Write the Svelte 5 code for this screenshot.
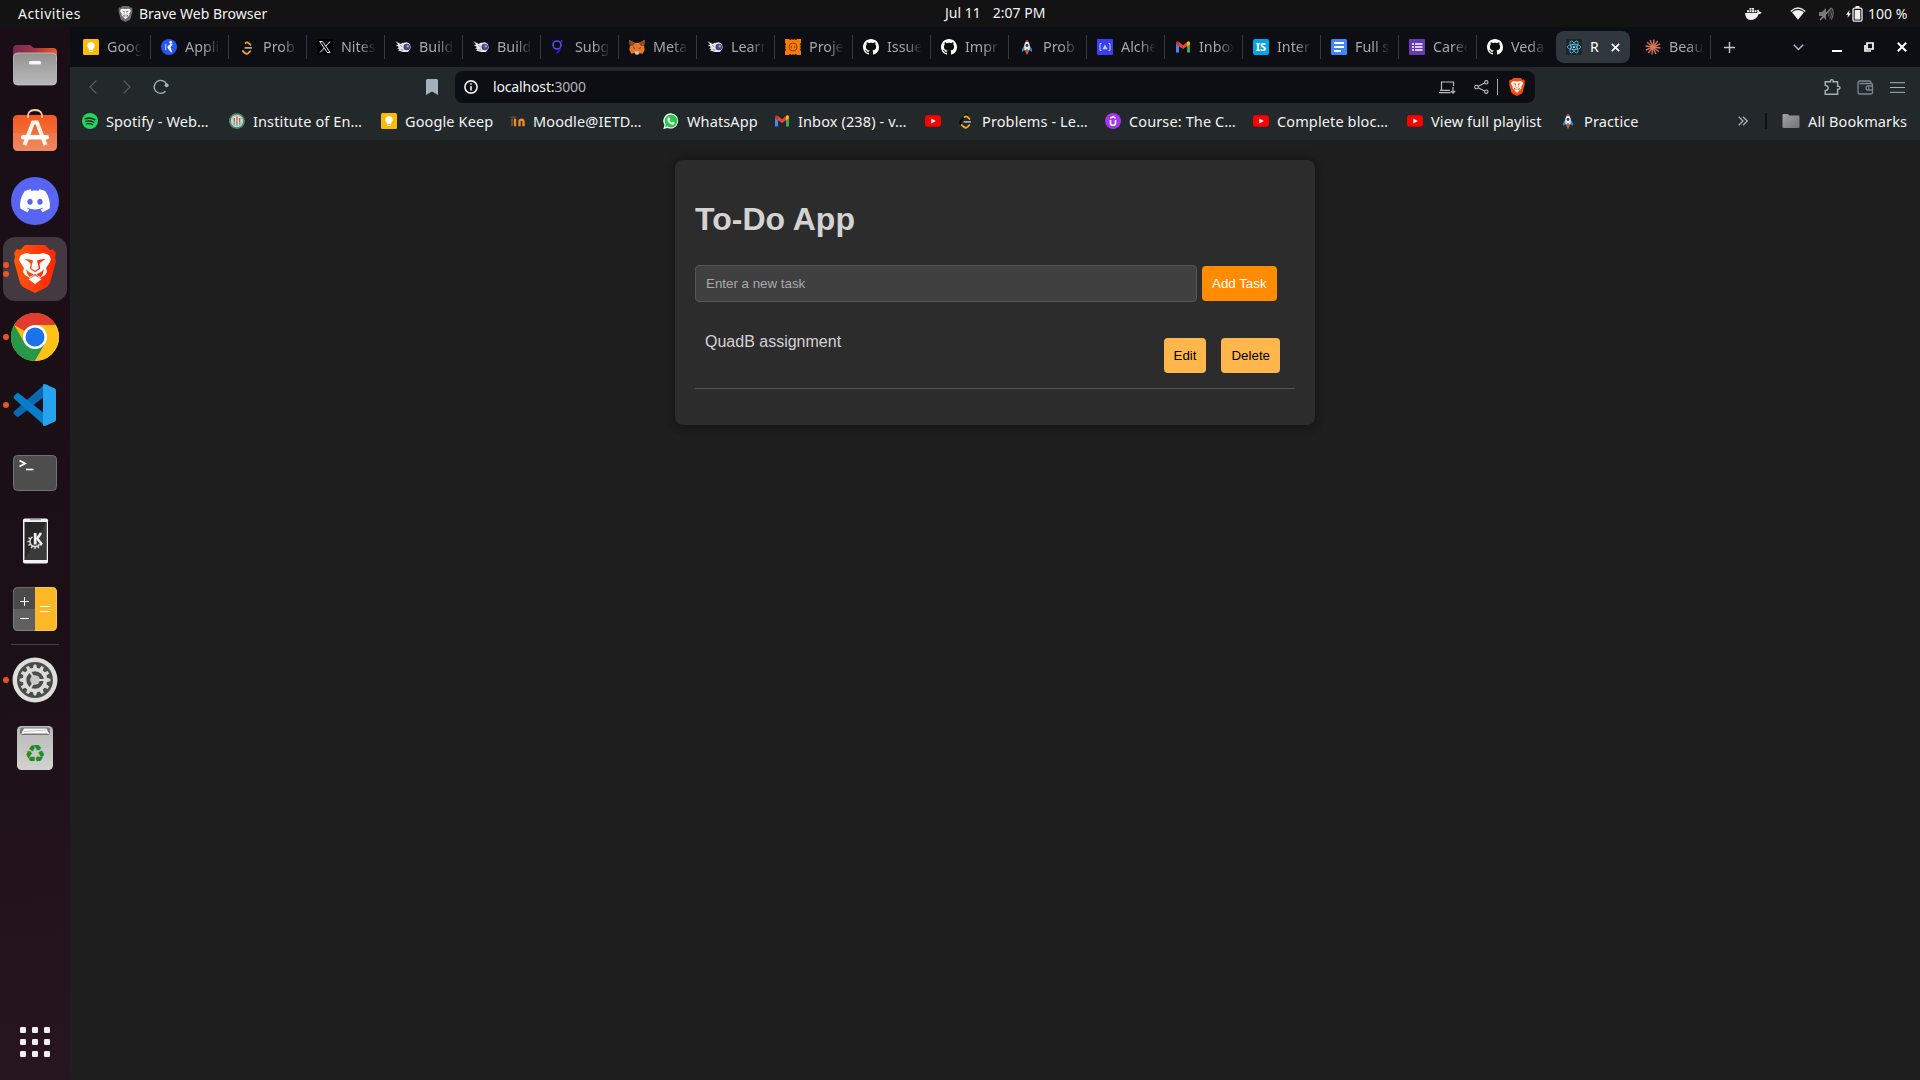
<script>
  const tabs = [
    ['keep', 'Goog'], ['appl', 'Appli'], ['leet', 'Prob'], ['x', 'Nites'],
    ['bird', 'Build'], ['bird', 'Build'], ['graph', 'Subg'], ['fox', 'Meta'],
    ['bird', 'Learn'], ['gear', 'Proje'], ['github', 'Issue'], ['github', 'Impr'],
    ['rocket', 'Prob'], ['alchemy', 'Alche'], ['gmail', 'Inbox'], ['is', 'Inter'],
    ['docs', 'Full s'], ['forms', 'Caree'], ['github', 'Veda']
  ];

  const bookmarks = [
    { icon: 'spotify', label: 'Spotify - Web…', w: 106 },
    { icon: 'institute', label: 'Institute of En…', w: 111 },
    { icon: 'keep', label: 'Google Keep', w: 87 },
    { icon: 'moodle', label: 'Moodle@IETD…', w: 113 },
    { icon: 'whatsapp', label: 'WhatsApp', w: 70 },
    { icon: 'gmail', label: 'Inbox (238) - v…', w: 110 },
    { icon: 'youtube', label: '', w: 0 },
    { icon: 'leet', label: 'Problems - Le…', w: 106 },
    { icon: 'udemy', label: 'Course: The C…', w: 107 },
    { icon: 'youtube', label: 'Complete bloc…', w: 113 },
    { icon: 'youtube', label: 'View full playlist', w: 112 },
    { icon: 'rocket', label: 'Practice', w: 55 }
  ];

  const dock = [
    { name: 'files', dots: 0 }, { name: 'software', dots: 0 }, { name: 'discord', dots: 0 },
    { name: 'brave', dots: 2 }, { name: 'chrome', dots: 1 }, { name: 'code', dots: 1 },
    { name: 'terminal', dots: 0 }, { name: 'phone', dots: 0 }, { name: 'calc', dots: 0 }
  ];
  const dockLower = [{ name: 'settings', dots: 1 }, { name: 'trash', dots: 0 }];

  const teeth = Array.from({ length: 12 }, (_, i) => i * 30);
  const rays = Array.from({ length: 12 }, (_, i) => i * 30 + 8);
  const cells = [0, 12, 24];
</script>

{#snippet lion(shield, face)}
  <path fill={shield} d="M14 0h20l5 5 3-1 3 4-1 4 1 4-6 22-3 4-12 6-12-6-3-4L3 16l1-4-1-4 3-4 3 1z" />
  <path fill={face} d="M10 10l5.500-2 4 1h9l4-1 5.500 2 2 4-1 3-4 6 1 4-2 3-5 3-5-4-5 4-5-3-2-3 1-4-4-6-1-3zM24 30.500l6.500 3.800L24 39l-6.500-4.700z" />
  <path fill={shield} d="M13.500 14q4-.5 8.500 1.500l-.5 2.500-1.500 1.500q-2-3-6.500-5.500zM34.500 14q-4-.5-8.500 1.500l.5 2.500 1.500 1.500q2-3 6.500-5.500zM15 24l3 3 5 2.500-4.500 2.500q-3-3-3.500-8zM33 24l-3 3-5 2.500 4.500 2.500q3-3 3.500-8z" />
  <path fill="none" stroke={shield} stroke-width="1.400" d="M20.500 18l-1 5.500 4.500 3 4.500-3-1-5.500" />
{/snippet}

{#snippet icon(name)}
  <svg class="ico" viewBox="0 0 16 16" aria-hidden="true">
    {#if name === 'keep'}
      <rect width="16" height="16" rx="1.500" fill="#fbbc04" />
      <path fill="#fff" d="M8 3a3.700 3.700 0 0 0-2.200 6.700V11h4.400V9.700A3.700 3.700 0 0 0 8 3zM6.200 11.700h3.600V13H6.200z" />
    {:else if name === 'appl'}
      <circle cx="8" cy="8" r="8" fill="#2558f5" />
      <circle cx="9.700" cy="3.300" r="1.400" fill="#fff" />
      <path d="M11.300 5.200Q8 5.500 6.800 8q1 3 3.700 5-.5-3-1.500-4.700Q9.500 6.500 11.300 5.200z" fill="#fff" stroke="#fff" />
      <path d="M4.800 5v6" stroke="#fff" stroke-width=".8" />
    {:else if name === 'leet'}
      <path d="M9.200.8L3 7.300q-1.800 2 0 4" fill="none" stroke="#08080a" stroke-width="1.900" />
      <path d="M6.500 4l1-.5q1.200-.2 2.200.6l1.800 1.800M3.700 12l2.200 2.100q1.800 1.300 3.400 0l2-2" fill="none" stroke="#f5a623" stroke-width="1.800" stroke-linecap="round" />
      <path d="M6.300 8.900h6" stroke="#aaa" stroke-width="1.700" stroke-linecap="round" />
    {:else if name === 'x'}
      <rect width="16" height="16" fill="#000" />
      <path d="M2.700 2.500h2.800l7.700 11h-2.800zM13 2.500L8.800 7.200M7.300 8.900L3 13.500" fill="none" stroke="#eee" stroke-width="1" />
    {:else if name === 'bird'}
      <path d="M.3 2.200L6 5l1-1 5-.8 3 1.800.7 4-2.700 4H8l-5-1.500L4.500 10 2 9.500 4 8 .8 6.200l2.400-.6z" fill="#e9e6ec" />
      <circle cx="11.800" cy="8" r="3.300" fill="#4a4488" /><circle cx="12.700" cy="7.300" r="1.200" fill="#a49ddd" />
      <path d="M5 6l2.500 2M5.500 10.500l3 .5" stroke="#9a8380" stroke-width=".8" />
    {:else if name === 'graph'}
      <circle cx="6" cy="6" r="4" fill="none" stroke="#5150e8" stroke-width="1.600" />
      <path d="M9 10.500L6 14" stroke="#4413c9" stroke-width="1.800" stroke-linecap="round" /><circle cx="10.700" cy="2" r=".9" fill="#4b35d0" />
    {:else if name === 'fox'}
      <path d="M0 .8L6 4h4l6-3.200-1 6 .7 4-2 4-3-.6-1.700 1.300H7L5.300 14l-3 .8-2-4 .7-4z" fill="#e8762b" />
      <path d="M0 .8L6 4 4 7H1zM16 .8L10 4l2 3h3z" fill="#8d4b22" />
      <path d="M6 12l2 .7 2-.7-.5 3.500h-3z" fill="#d8c7b8" /><path d="M4 8.500l2 1M12 8.500l-2 1" stroke="#5a4434" />
    {:else if name === 'gear'}
      <path fill="#f97b06" d="M0 0h4l1 1 2-1 1 1 1-1 2 1 1-1h4v4l-1 1 1 2-1 1 1 1-1 2 1 1v4h-4l-1-1-2 1-1-1-1 1-2-1-1 1H0v-4l1-1-1-2 1-1-1-1 1-2-1-1z" />
      <circle cx="8" cy="8" r="4" fill="none" stroke="#6b3b10" stroke-width=".8" /><path d="M7 6.800L5.700 8 7 9.200M9 6.800L10.300 8 9 9.200" fill="none" stroke="#6b3b10" stroke-width=".8" />
    {:else if name === 'github'}
      <path fill="#fff" d="M8 0C3.580 0 0 3.580 0 8c0 3.540 2.290 6.530 5.470 7.590.4.070.55-.17.55-.38 0-.19-.01-.82-.01-1.490-2.010.37-2.530-.49-2.690-.94-.09-.23-.48-.94-.82-1.130-.28-.15-.68-.52-.01-.53.63-.01 1.080.58 1.230.82.72 1.210 1.870.87 2.330.66.070-.52.280-.87.510-1.070-1.780-.2-3.640-.89-3.640-3.950 0-.87.31-1.590.82-2.150-.08-.2-.36-1.020.08-2.120 0 0 .67-.21 2.200.82.64-.18 1.320-.27 2-.27.68 0 1.360.09 2 .27 1.530-1.040 2.200-.82 2.200-.82.44 1.100.16 1.920.08 2.120.51.56.82 1.270.82 2.150 0 3.070-1.870 3.750-3.650 3.950.29.25.54.73.54 1.480 0 1.070-.01 1.930-.01 2.200 0 .21.15.46.55.38A8.010 8.010 0 0016 8c0-4.420-3.580-8-8-8z" />
    {:else if name === 'rocket'}
      <path d="M5 7L3 10v3l3-2zM11 7l2 3v3l-3-2z" fill="#2f86c8" />
      <path d="M8 1c-3 3-3.500 7-2.300 10.500h4.600C11.500 8 11 4 8 1z" fill="#e3e7ea" />
      <path d="M8 .5L6.600 3h2.800z" fill="#bb3b35" /><circle cx="8" cy="6.500" r="1.400" fill="#263f59" />
      <path d="M6.200 12h3.600L8 16z" fill="#f36c21" /><path d="M7.300 10h1.400v3H7.300z" fill="#ca3c37" />
    {:else if name === 'alchemy'}
      <rect width="16" height="16" rx="1" fill="#363ff9" />
      <path d="M4.500 4.500H3v7h1.500M11.500 4.500H13v7h-1.500" fill="none" stroke="#cbd0ff" stroke-width="1" /><path d="M8 5.500L5.400 10.300h5.200z" fill="#cbd0ff" />
    {:else if name === 'gmail'}
      <path d="M1 4v9.500h3V6z" fill="#4285f4" /><path d="M15 4v9.500h-3V6z" fill="#34a853" />
      <path d="M1 4.300L4 3l4 3.200L12 3v4.200L8 10 4 7.200z" fill="#ea4335" /><path d="M1 3.500q1-2 3-.5v4.200L1 5.200z" fill="#c5352b" /><path d="M15 3.500q-1-2-3-.5v4.200l3-2z" fill="#fbbc04" />
    {:else if name === 'is'}
      <rect width="16" height="16" rx="2" fill="#04a5e8" />
      <text x="8" y="12.300" class="is" text-anchor="middle">IS</text>
    {:else if name === 'docs'}
      <rect width="16" height="16" rx="1.500" fill="#4285f4" /><path d="M3 4h10M3 8h10M3 12h7" stroke="#fff" stroke-width="1.900" />
    {:else if name === 'forms'}
      <rect width="16" height="16" rx="1" fill="#673ab7" /><path d="M3 5h2M6 5h7.500M3 8h2M6 8h7.500M3 11h2M6 11h7.500" stroke="#fff" stroke-width="1.700" />
    {:else if name === 'react'}
      <rect width="16" height="16" rx="2" fill="#20232a" />
      <g fill="none" stroke="#61dafb" stroke-opacity=".85" stroke-width=".8"><ellipse cx="8" cy="8" rx="6.700" ry="2.600" /><ellipse cx="8" cy="8" rx="6.700" ry="2.600" transform="rotate(60 8 8)" /><ellipse cx="8" cy="8" rx="6.700" ry="2.600" transform="rotate(120 8 8)" /></g>
      <circle cx="8" cy="8" r="1.300" fill="#61dafb" />
    {:else if name === 'claude'}
      {#each rays as a}<path d="M8 8V.4" stroke="#d97757" stroke-width="1.400" transform="rotate({a} 8 8)" />{/each}
    {:else if name === 'spotify'}
      <circle cx="8" cy="8" r="8" fill="#1ed760" />
      <g fill="none" stroke="#1c2a22" stroke-linecap="round"><path d="M3.300 5.700q5-1.500 9.500 1" stroke-width="1.700" /><path d="M3.800 8.400q4-1.200 8 .9" stroke-width="1.400" /><path d="M4.200 10.900q3.500-.9 6.600.8" stroke-width="1.100" /></g>
    {:else if name === 'institute'}
      <circle cx="8" cy="8" r="7" fill="#e6e4de" stroke="#4c8a62" stroke-width="1.900" stroke-dasharray="2.200 .3" />
      <circle cx="8" cy="8" r="5.300" fill="none" stroke="#9bb3a2" stroke-width=".7" />
      <path d="M5.300 5v4M8 3.500v4M10.700 5v4" stroke="#c05a40" stroke-width="1.400" /><path d="M5.300 9v3M10.700 9v3" stroke="#56b3d8" stroke-width="1.600" /><path d="M8 7.500v5" stroke="#555" />
    {:else if name === 'moodle'}
      <path d="M0 4.500l4.500-2L9 4 4.500 6z" fill="#4a4441" /><path d="M3 6v7" stroke="#6b4a31" stroke-width="2" />
      <path d="M6 13.200V5.800M10.500 13.200V8.500q0-1.800 2-1.800t2 1.800v4.700" fill="none" stroke="#f08a24" stroke-width="2.400" />
    {:else if name === 'whatsapp'}
      <path d="M8 .2A7.700 7.700 0 1 1 4.500 15L.3 16l1.200-4A7.700 7.700 0 0 1 8 .2z" fill="#fff" />
      <circle cx="8" cy="8" r="6.400" fill="#25c84b" /><path d="M2 14l.7-3L5 13.300z" fill="#25c84b" />
      <path d="M5.500 4.300l1 .1.800 1.900-.8 1q1 1.700 2.500 2.300l.9-1 1.900.9q.1 2-1.900 2.200Q5.500 11.400 4.400 7q-.1-1.600 1.100-2.700z" fill="#fff" />
    {:else if name === 'youtube'}
      <rect y="2.200" width="16" height="11.600" rx="3" fill="#f00" /><path d="M6.300 5.500v5L10.800 8z" fill="#fff" />
    {:else if name === 'udemy'}
      <circle cx="8" cy="8" r="8" fill="#a435f0" /><path d="M5.500 7v3q0 2.300 2.500 2.300t2.500-2.300V7M5.300 5.200L8 3.600l2.700 1.600" fill="none" stroke="#fff" stroke-width="1.600" />
    {/if}
  </svg>
{/snippet}

{#snippet dockIcon(name)}
  <svg class="app" viewBox="0 0 48 48" aria-hidden="true">
    {#if name === 'files'}
      <defs>
        <linearGradient id="tabg"><stop stop-color="#7a2a52" /><stop offset=".5" stop-color="#a33444" /><stop offset="1" stop-color="#f05a22" /></linearGradient>
        <linearGradient id="foldg" x2="0" y2="1"><stop stop-color="#929292" /><stop offset="1" stop-color="#b9b9b9" /></linearGradient>
      </defs>
      <path d="M2 20V8q0-4 4-4h13l4 3h19q4 0 4 4v9z" fill="url(#tabg)" />
      <rect x="2.500" y="12" width="43" height="32" rx="4" fill="url(#foldg)" stroke="#c4c4c4" stroke-width=".8" />
      <rect x="18" y="20" width="12" height="3.400" rx="1.500" fill="#f7f7f7" />
    {:else if name === 'software'}
      <defs><linearGradient id="bag" x2="0" y2="1"><stop stop-color="#f4581f" /><stop offset="1" stop-color="#ee8156" /></linearGradient></defs>
      <rect x="2" y="6" width="44" height="36" rx="4.500" fill="url(#bag)" />
      <path d="M2 24h44v13q0 5-5 5H7q-5 0-5-5z" fill="#fff" opacity=".07" />
      <path d="M17 9q-1-8 7-8t7 8" fill="none" stroke="#f6d3a8" stroke-width="1.800" />
      <path d="M13.500 36L22 13.500h4L34.500 36" fill="none" stroke="#fff4ea" stroke-width="4" />
      <rect x="10" y="26" width="28" height="4.600" rx="2.300" fill="#fff" />
    {:else if name === 'discord'}
      <circle cx="24" cy="24" r="24" fill="#5865f2" />
      <g transform="translate(9 8.700) scale(1.250)"><path fill="#fff" d="M20.317 4.3698a19.7913 19.7913 0 00-4.8851-1.5152.0741.0741 0 00-.0785.0371c-.211.3753-.4447.8648-.6083 1.2495-1.8447-.2762-3.68-.2762-5.4868 0-.1636-.3933-.4058-.8742-.6177-1.2495a.077.077 0 00-.0785-.037 19.7363 19.7363 0 00-4.8852 1.515.0699.0699 0 00-.0321.0277C.5334 9.0458-.319 13.5799.0992 18.0578a.0824.0824 0 00.0312.0561c2.0528 1.5076 4.0413 2.4228 5.9929 3.0294a.0777.0777 0 00.0842-.0276c.4616-.6304.8731-1.2952 1.226-1.9942a.076.076 0 00-.0416-.1057c-.6528-.2476-1.2743-.5495-1.8722-.8923a.077.077 0 01-.0076-.1277c.1258-.0943.2517-.1923.3718-.2914a.0743.0743 0 01.0776-.0105c3.9278 1.7933 8.18 1.7933 12.0614 0a.0739.0739 0 01.0785.0095c.1202.099.246.1981.3728.2924a.077.077 0 01-.0066.1276 12.2986 12.2986 0 01-1.873.8914.0766.0766 0 00-.0407.1067c.3604.698.7719 1.3628 1.225 1.9932a.076.076 0 00.0842.0286c1.961-.6067 3.9495-1.5219 6.0023-3.0294a.077.077 0 00.0313-.0552c.5004-5.177-.8382-9.6739-3.5485-13.6604a.061.061 0 00-.0312-.0286zM8.02 15.3312c-1.1825 0-2.1569-1.0857-2.1569-2.419 0-1.3332.9555-2.4189 2.157-2.4189 1.2108 0 2.1757 1.0952 2.1568 2.419 0 1.3332-.9555 2.4189-2.1569 2.4189zm7.9748 0c-1.1825 0-2.1569-1.0857-2.1569-2.419 0-1.3332.9554-2.4189 2.1569-2.4189 1.2108 0 2.1757 1.0952 2.1568 2.419 0 1.3332-.946 2.4189-2.1568 2.4189Z" /></g>
    {:else if name === 'brave'}
      <defs><linearGradient id="brv"><stop stop-color="#ff5a05" /><stop offset=".45" stop-color="#ff4010" /><stop offset="1" stop-color="#ff2600" /></linearGradient></defs>
      {@render lion('url(#brv)', '#fff')}
    {:else if name === 'chrome'}
      <circle cx="24" cy="24" r="24" fill="#fbbc12" />
      <path d="M24 24L3.200 12A24 24 0 0 1 44.800 12H24z" fill="#e33b2e" />
      <path d="M3.200 12L13.600 30 24 36 34.400 30 24 48A24 24 0 0 1 3.200 12z" fill="#279847" />
      <path d="M24 12h20.800A24 24 0 0 1 24 48l10.400-18z" fill="#fcc219" />
      <circle cx="24" cy="24" r="12" fill="#fff" /><circle cx="24" cy="24" r="9.500" fill="#1a73e8" />
    {:else if name === 'code'}
      <path d="M34 3v12L8 35.500q-1.300.8-2.400 0L3 33q-1-1.200 0-2.400z" fill="#0b69b2" />
      <path d="M34 45V33L8 12.500q-1.300-.8-2.400 0L3 15q-1 1.200 0 2.400z" fill="#087dcb" />
      <path d="M34 3l10 4.500q1 .5 1 2v29q0 1.500-1 2L34 45q-1.500.3-2-1V4q.5-1.300 2-1z" fill="#26a3ef" />
    {:else if name === 'terminal'}
      <rect x="2.500" y="6.500" width="43" height="35" rx="4" fill="#4d4d4d" stroke="#717171" />
      <path d="M8.500 11.500l5.500 3-5.500 3" fill="none" stroke="#fff" stroke-width="1.800" /><path d="M15 20.500h7.500" stroke="#fff" stroke-width="1.600" />
    {:else if name === 'phone'}
      <rect x="12" y="1.500" width="25" height="45" rx="1.800" fill="#f2f2f2" /><rect x="13.500" y="5" width="22" height="38" fill="#272727" />
      <path d="M19 2.700h11" stroke="#999" />
      <path d="M13.500 43L35.500 5v38z" fill="#3a3a3a" />
      <path d="M21.500 19.800A5.300 5.300 0 1 0 28.500 27.500" fill="none" stroke="#ddd" stroke-width="1.500" />
      {#each teeth as a}{#if a >= 120 && a < 330}<path d="M24 19.200v-2.300" stroke="#ddd" stroke-width="1.500" transform="rotate({a} 24 24.500)" />{/if}{/each}
      <path d="M24.200 16v11.500" stroke="#eee" stroke-width="2.800" /><path d="M30 16l-3.800 5.500 4.800 6" fill="none" stroke="#eee" stroke-width="2.500" />
    {:else if name === 'calc'}
      <path d="M24 2v44H7q-5 0-5-5V7q0-5 5-5z" fill="#4a4a4a" /><path d="M2 24h22v22H7q-5 0-5-5z" fill="#606060" />
      <path d="M24 2h17q5 0 5 5v34q0 5-5 5H24z" fill="#fcb827" />
      <rect x="2.400" y="2.400" width="43.200" height="43.200" rx="4.600" fill="none" stroke="#fff" stroke-opacity=".25" stroke-width=".8" />
      <path d="M13.500 12v9M9 16.500h9M9 33.500h9M29 21.500h10M29 26.500h10" stroke="#fff" stroke-width="1" />
    {:else if name === 'settings'}
      <circle cx="24" cy="24" r="22.500" fill="#dededc" /><circle cx="24" cy="24" r="18" fill="#4c4c4c" />
      <circle cx="24" cy="24" r="10.500" fill="none" stroke="#dcdcda" stroke-width="3.600" />
      {#each teeth as a}<path d="M22.500 12.500l.6-3.500h1.800l.6 3.500z" fill="#dcdcda" stroke="#dcdcda" stroke-width="1" transform="rotate({a} 24 24)" />{/each}
      <circle cx="24" cy="24" r="4.800" fill="#c8c8c8" />
      <path d="M28 24h6M22 27.500l-3 5M22 20.500l-3-5" stroke="#dcdcda" stroke-width="2" />
    {:else if name === 'trash'}
      <defs><linearGradient id="bin" x2="0" y2="1"><stop stop-color="#b8b8b8" /><stop offset="1" stop-color="#d2d2d0" /></linearGradient></defs>
      <rect x="6" y="2" width="36" height="44" rx="4.500" fill="url(#bin)" />
      <rect x="9" y="3.500" width="30" height="7.500" rx="2" fill="#777" /><path d="M10 10.500l3-6h22.500l3 6-2.500-1H12.500z" fill="#fafafa" /><path d="M13 7.500l22-1.500" stroke="#b5b5b5" stroke-width=".7" />
      <text x="24" y="38" class="recycle" text-anchor="middle">♻</text>
    {/if}
  </svg>
{/snippet}

{#snippet dockItem(item)}
  <div class="dock-item">
    <div class="dots">{#each Array(item.dots) as _}<i></i>{/each}</div>
    <div class="tile" class:current={item.name === 'brave'}>{@render dockIcon(item.name)}</div>
  </div>
{/snippet}

<div class="desktop">
  <header class="topbar">
    <span class="activities">Activities</span>
    <div class="current-app">
      <svg width="15" height="16" viewBox="2 0 44 48">{@render lion('#6c6c6c', '#fff')}</svg>
      <span>Brave Web Browser</span>
    </div>
    <div class="clock"><span>Jul 11</span><span>2:07 PM</span></div>
    <div class="tray">
      <svg class="docker" width="17" height="13" viewBox="0 0 17 13" fill="#eee"><path d="M0 6h12q1-1.500 0-2.500l1-1q1.200 1 1.300 2.300 1.400-.2 2.400.6-1 1.700-3 1.500Q11.500 13 5.500 13 .5 13 0 6zM2 3.300h2v2H2zM4.500 3.300h2v2h-2zM7 3.300h2v2H7zM9.500 3.300h2v2h-2zM4.500 1h2v1.800h-2zM7 1h2v1.800H7z" /></svg>
      <svg class="wifi" width="16" height="13" viewBox="0 0 16 13"><path d="M.7 4.500q7.300-7 14.600 0" fill="none" stroke="#eee" stroke-width="1.300" /><path d="M2 5.300q6-4.500 12 0L8 12.800z" fill="#f2f2f2" /></svg>
      <svg class="mute" width="15" height="14" viewBox="0 0 15 14" fill="none" stroke="#6c6c6c" stroke-width="1.100"><path d="M0 5h3l4-4v12L3 9H0z" fill="#777" stroke="none" /><path d="M9.500 5q1 2 0 4.500M11.500 3.500q2 4-.5 8M13.200 1.500q2.200 5.500-.8 11" /><path d="M1 13L12.500 1" stroke="#858585" stroke-width="1.400" /></svg>
      <svg class="battery" width="17" height="16" viewBox="0 0 17 16"><path d="M3.500 4L0 8.700h2L1.500 12 5 7.300H3z" fill="#eee" /><rect x="7" y="2.200" width="9" height="13" rx="1.500" fill="none" stroke="#eee" stroke-width="1.300" /><path d="M9.500 1h4" stroke="#eee" stroke-width="2" /><rect x="8.700" y="4" width="5.600" height="9.500" fill="#eee" /></svg>
      <span>100 %</span>
    </div>
  </header>

  <div class="workspace">
    <aside class="dock">
      {#each dock as item}{@render dockItem(item)}{/each}
      <div class="rule"></div>
      {#each dockLower as item}{@render dockItem(item)}{/each}
      <svg class="grid" width="30" height="30" viewBox="0 0 30 30" fill="#f2f0f0">
        {#each cells as y}{#each cells as x}<rect {x} {y} width="6" height="6" rx="1.200" />{/each}{/each}
      </svg>
    </aside>

    <main class="browser">
      <nav class="tabs">
        {#each tabs as [name, title]}
          <div class="tab">{@render icon(name)}<span>{title}</span></div>
        {/each}
        <div class="active">
          {@render icon('react')}<span>R</span>
          <svg width="9" height="9" viewBox="0 0 9 9"><path d="M.8.8l7.400 7.400M8.200.8L.8 8.200" stroke="#fff" stroke-width="1.700" /></svg>
        </div>
        <div class="tab last">{@render icon('claude')}<span>Beau</span></div>
        <svg class="plus" width="11" height="11" viewBox="0 0 11 11"><path d="M5.500 0v11M0 5.500h11" stroke="#c3c7ca" stroke-width="1.400" /></svg>
        <div class="window">
          <svg width="11" height="7" viewBox="0 0 11 7"><path d="M.8.8l4.700 4.700L10.200.8" fill="none" stroke="#a9bac4" stroke-width="1.500" /></svg>
          <svg class="min" width="10" height="2" viewBox="0 0 10 2"><path d="M0 1h10" stroke="#fff" stroke-width="2" /></svg>
          <svg class="restore" width="10" height="10" viewBox="0 0 10 10"><path d="M3 1h6v6H3zM1 3v6h6" fill="none" stroke="#fff" stroke-width="1.700" /></svg>
          <svg class="close" width="10" height="10" viewBox="0 0 10 10"><path d="M.8.8l8.400 8.400M9.200.8L.8 9.200" stroke="#fff" stroke-width="2" /></svg>
        </div>
      </nav>

      <div class="toolbar">
        <svg class="back" width="8" height="14" viewBox="0 0 8 14"><path d="M7.300.6L1 7l6.300 6.400" fill="none" stroke="#566067" stroke-width="1.200" /></svg>
        <svg class="fwd" width="8" height="14" viewBox="0 0 8 14"><path d="M.7.6L7 7 .7 13.400" fill="none" stroke="#566067" stroke-width="1.200" /></svg>
        <svg class="reload" width="16" height="16" viewBox="0 0 16 16"><path d="M13.500 5A6.500 6.500 0 1 0 12.500 12.300" fill="none" stroke="#a3b2bb" stroke-width="1.400" /><circle cx="13.600" cy="6.300" r="2" fill="#a3b2bb" /></svg>
        <svg class="mark" width="12" height="16" viewBox="0 0 12 16"><path d="M0 1.500Q0 0 1.500 0h9Q12 0 12 1.500V16l-6-3.500L0 16z" fill="#a3b2bb" /></svg>
        <div class="url">
          <svg class="info" width="14" height="14" viewBox="0 0 14 14"><circle cx="7" cy="7" r="6.100" fill="none" stroke="#eee" stroke-width="1.600" /><path d="M7 6v4.500M7 3.300v1.500" stroke="#eee" stroke-width="1.600" /></svg>
          <span>localhost:<em>3000</em></span>
          <svg class="install" width="17" height="13" viewBox="0 0 17 13" fill="none" stroke="#b9bdc1" stroke-width="1.200"><path d="M14.500 5V1h-12v8M0 11.700h11.500M1 9.300h10M14 6v6M11.800 9.900l2.200 2.200 2.200-2.200" /></svg>
          <svg class="share" width="15" height="14" viewBox="0 0 15 14" fill="none" stroke="#b9bdc1" stroke-width="1.100"><circle cx="2.500" cy="7" r="1.800" /><circle cx="12.300" cy="2.300" r="1.700" /><circle cx="12.300" cy="11.700" r="1.700" /><path d="M4.200 6.200l6.500-3.100M4.200 7.800l6.500 3.100" /></svg>
          <i></i>
          <svg width="16" height="18" viewBox="3 0 42 48">{@render lion('#fb4a0b', '#fff')}</svg>
        </div>
        <div class="actions">
          <svg width="17" height="17" viewBox="0 0 17 17"><path d="M1.200 2.700h5.300q-.3-2 1.300-2t1.300 2h4.500v4.500q2.400-.2 2.400 1.500t-2.400 1.500v5H1.200v-3.500q3-.6 3-2.700t-3-2.700z" fill="none" stroke="#a3b2bb" stroke-width="1.400" /></svg>
          <svg width="17" height="15" viewBox="0 0 17 15" fill="none" stroke="#7b8890" stroke-width="1.300"><path d="M1 3q0-2 2-2h9.500q1.500 0 1.500 2.500M1 3v9q0 2 2 2h11q1.500 0 1.500-1.500V5q0-1.500-1.500-1.500H2.500M15.500 6h-5Q9 6 9 8t1.500 2h5" /><path d="M11 8h1.500" /></svg>
          <svg width="15" height="11" viewBox="0 0 15 11"><path d="M0 .7h15M0 5.500h15M0 10.300h15" stroke="#a3b2bb" stroke-width="1" /></svg>
        </div>
      </div>

      <nav class="bookmarks">
        {#each bookmarks as b}
          <div class="bookmark">{@render icon(b.icon)}{#if b.label}<span style:width="{b.w}px">{b.label}</span>{/if}</div>
        {/each}
        <svg class="more" width="10" height="10" viewBox="0 0 10 10"><path d="M.7.7L5 5 .7 9.300M5 .7L9.300 5 5 9.300" fill="none" stroke="#a3b2bb" stroke-width="1.300" /></svg>
        <i></i>
        <svg class="folder" width="18" height="14" viewBox="0 0 18 14"><defs><linearGradient id="bf" y2="1"><stop stop-color="#a3a2a8" /><stop offset="1" stop-color="#737277" /></linearGradient></defs><path d="M.5 1q0-1 1-1H6l1 1.500h9.500q1 0 1 1V13q0 1-1 1h-15q-1 0-1-1z" fill="url(#bf)" /></svg>
        <span class="all">All Bookmarks</span>
      </nav>

      <section class="page">
        <div class="card">
          <h1>To-Do App</h1>
          <div class="entry">
            <input placeholder="Enter a new task" />
            <button>Add Task</button>
          </div>
          <div class="task">
            <span>QuadB assignment</span>
            <div class="controls"><button>Edit</button><button>Delete</button></div>
          </div>
        </div>
      </section>
    </main>
  </div>
</div>

<style>
  :global(body) { margin: 0; overflow: hidden; background: #1e1e1e; }
  .desktop { width: 1920px; height: 1080px; display: flex; flex-direction: column; font: 14px/20px "Noto Sans", sans-serif; color: #f2f2f2; }
  svg { display: block; flex: none; }
  span { white-space: nowrap; }
  .topbar { height: 27px; flex: none; box-sizing: border-box; display: grid; grid-template-columns: 118px 827px 1fr auto; align-items: center; background: #131313; }
  .activities { padding-left: 18px; letter-spacing: .45px; }
  .current-app { display: flex; align-items: center; gap: 6px; }
  .clock { display: flex; gap: 12px; padding-bottom: 2px; }
  .tray { display: flex; align-items: center; padding-right: 12px; }
  .wifi { margin-left: 28px; }
  .mute { margin-left: 13px; }
  .battery { margin-left: 12px; }
  .tray span { width: 40px; margin-left: 5px; }
  .workspace { flex: 1; min-height: 0; display: flex; }
  .dock { width: 70px; box-sizing: border-box; padding: 4px 0 23px; display: flex; flex-direction: column; background: linear-gradient(175deg, #190e15 0%, #1c1017 60%, #27151f 100%); }
  .dock-item { height: 68px; flex: none; display: flex; align-items: center; }
  .dots { width: 3px; display: flex; flex-direction: column; gap: 3px; z-index: 1; }
  .dots i { width: 6px; height: 6px; border-radius: 50%; background: #e95420; margin-left: 3px; }
  .tile { width: 64px; height: 64px; display: grid; place-items: center; border-radius: 12px; }
  .tile.current { background: #423a40; }
  .app { width: 48px; height: 48px; }
  .rule { height: 1px; flex: none; margin: 1px 11px; background: #474145; }
  .grid { margin: auto 20px 0; }
  .recycle { font: 24px "DejaVu Sans", sans-serif; fill: #238b1e; }
  .browser { width: 1850px; display: flex; flex-direction: column; background: #23282b; }
  .ico { width: 16px; height: 16px; }
  .is { font: bold 11px "Noto Sans", sans-serif; fill: #fff; }
  .tabs { height: 40px; flex: none; box-sizing: border-box; padding-left: 3px; display: flex; align-items: center; background: #0d0e13; color: #a5a7aa; }
  .tab { width: 78px; height: 24px; box-sizing: border-box; padding-left: 10px; display: flex; align-items: center; gap: 8px; border-right: 1px solid #37393d; flex: none; }
  .tab:nth-child(19) { border-color: transparent; }
  .tab span { width: 35px; overflow: hidden; font-size: 14.3px; -webkit-mask-image: linear-gradient(90deg, #000 55%, transparent 100%); mask-image: linear-gradient(90deg, #000 55%, transparent 100%); }
  .tab.last { margin-left: 3px; padding-left: 12px; }
  .active { width: 74px; height: 32px; margin-left: 1px; box-sizing: border-box; padding: 0 10px; display: flex; align-items: center; border-radius: 8px; background: #30383d; color: #fff; flex: none; }
  .active span { width: 22px; margin-left: 8px; }
  .plus { margin-left: 13px; }
  .window { margin-left: auto; padding-right: 13px; display: flex; align-items: center; }
  .min { margin: 8px 0 0 28px; }
  .restore { margin-left: 22px; }
  .close { margin-left: 23px; }
  .toolbar { height: 40px; flex: none; display: flex; align-items: center; padding-left: 19px; }
  .fwd { margin-left: 26px; }
  .reload { margin-left: 22px; }
  .mark { margin-left: 257px; }
  .url { width: 1080px; height: 32px; margin-left: 17px; box-sizing: border-box; padding: 0 10px 0 9px; display: flex; align-items: center; border-radius: 8px; background: #0d0e13; }
  .url span { margin: 0 auto 0 15px; letter-spacing: -.15px; }
  .url em { font-style: normal; color: #b3b5b8; }
  .share { margin-left: 18px; }
  .url i { width: 1px; height: 16px; margin: 0 11px 0 8px; background: #a0a3a6; }
  .actions { margin-left: auto; padding-right: 15px; display: flex; align-items: center; gap: 16px; }
  .bookmarks { height: 33px; flex: none; box-sizing: border-box; padding: 0 14px 5px 12px; display: flex; align-items: center; font-size: 14.500px; letter-spacing: .12px; }
  .bookmark { display: flex; align-items: center; gap: 8px; margin-right: 17px; flex: none; }
  .bookmarks .all { width: 98px; }
  .more { margin-left: auto; }
  .bookmarks i { width: 2px; height: 16px; margin: 0 15px 0 17px; background: #101216; }
  .folder { margin-right: 8px; }
  .page { flex: 1; padding-top: 20px; background: #1e1e1e; font-family: "Liberation Sans", Arial, sans-serif; color: #d3d3d3; }
  .card { width: 640px; height: 265px; box-sizing: border-box; margin: 0 auto; padding: 20px; border-radius: 8px; background: #2c2c2c; box-shadow: 0 0 10px rgba(0, 0, 0, .35), 0 3px 8px rgba(0, 0, 0, .12); }
  h1 { margin: 21px 0 27px; font-size: 32px; line-height: 37px; }
  .entry { display: flex; align-items: center; gap: 5px; }
  input { width: 502px; height: 37px; box-sizing: border-box; padding: 10px; border: 1px solid #555; border-radius: 4px; background: #404040; font: 13.333px "Liberation Sans", Arial, sans-serif; }
  input::placeholder { color: #aaa; }
  button { height: 35px; padding: 10px; border: 0; border-radius: 4px; background: #ff8c00; color: #fff; font: 13.333px "Liberation Sans", Arial, sans-serif; }
  .task { height: 67px; margin-top: 20px; padding: 10px 15px 0 10px; box-sizing: border-box; display: flex; justify-content: space-between; border-bottom: 1px solid #555; font-size: 16px; }
  .controls { display: flex; gap: 15px; padding-top: 6px; }
  .controls button { background: #ffb74d; color: #000; }
</style>
